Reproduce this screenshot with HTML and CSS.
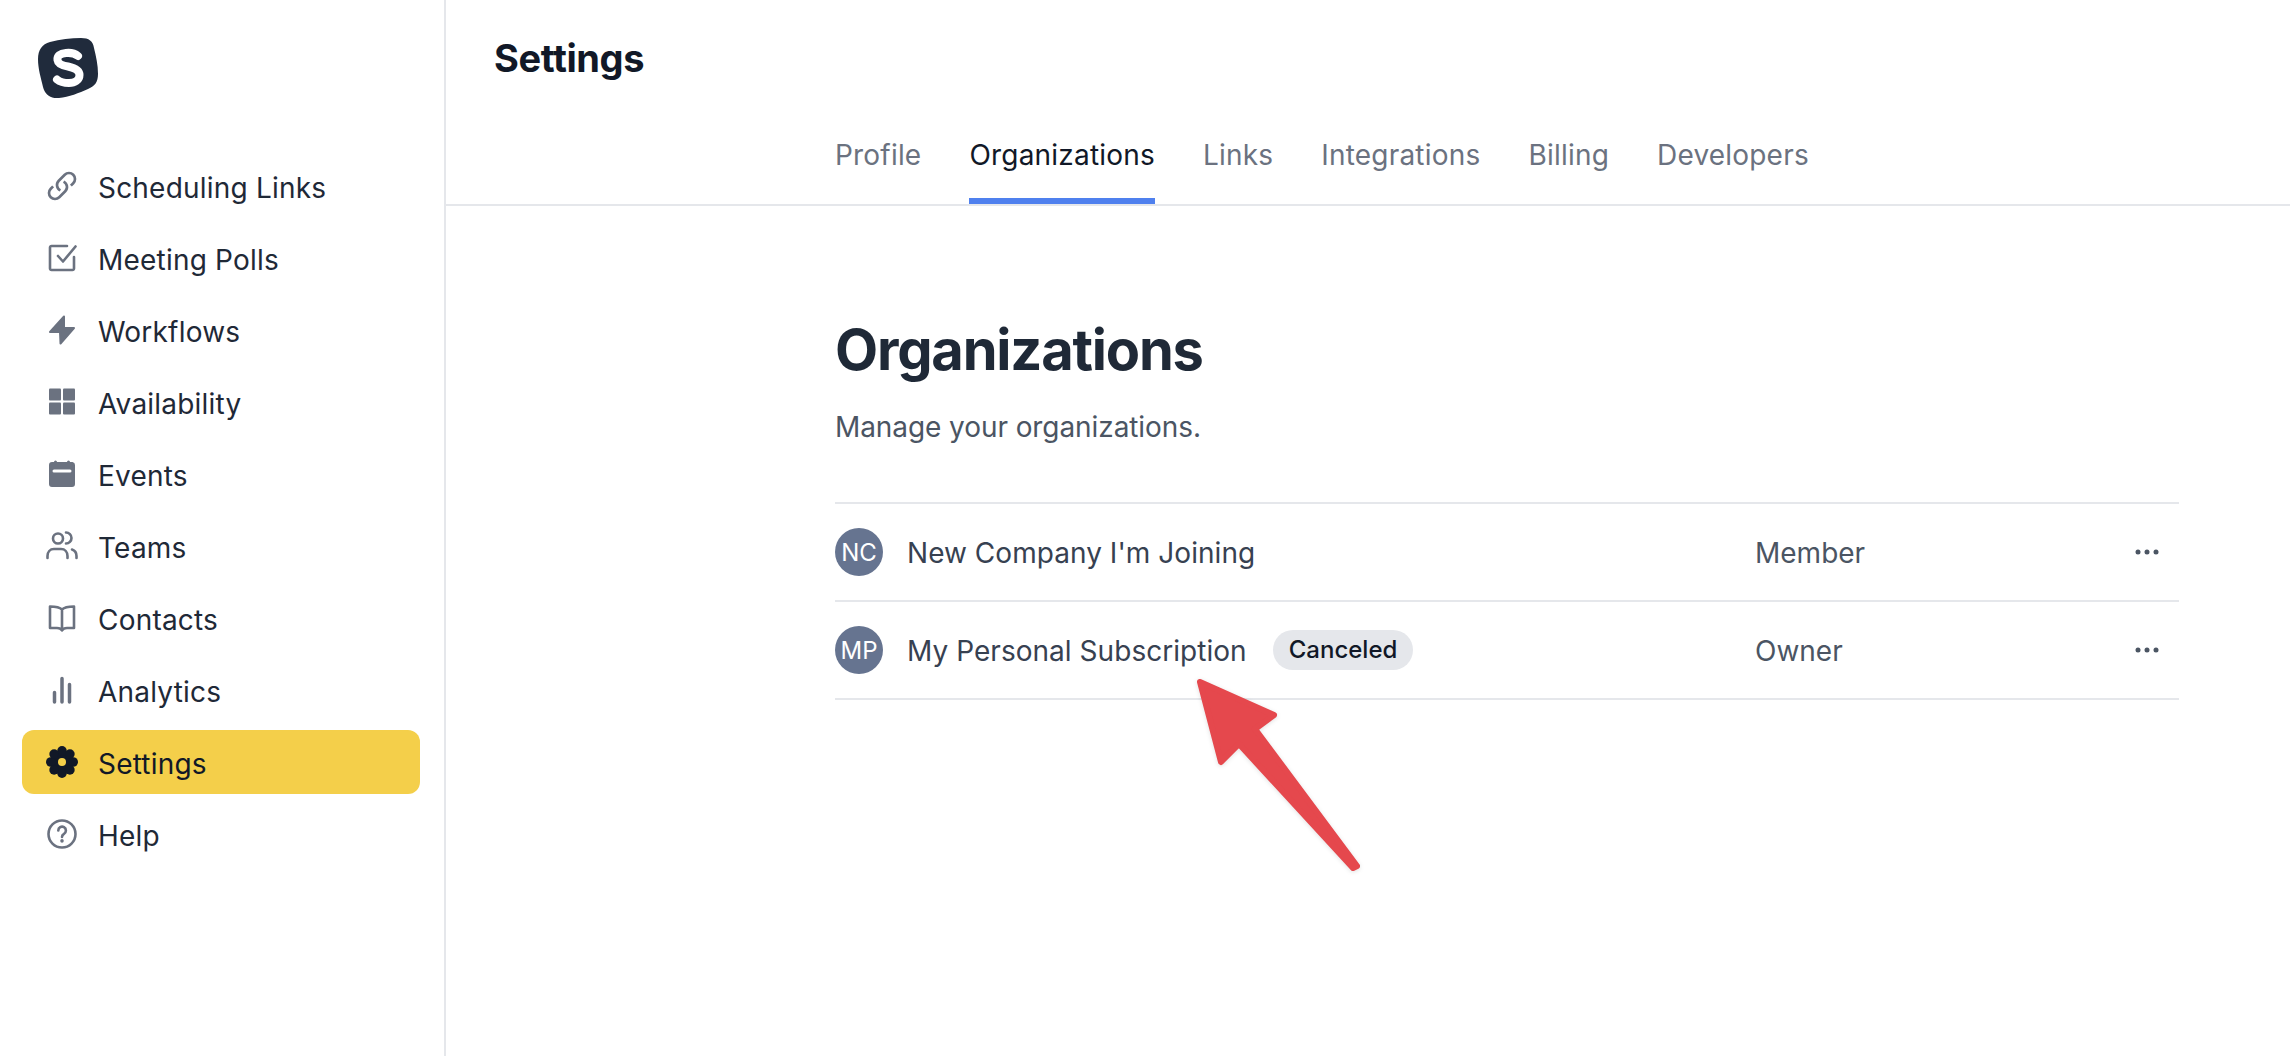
FILE: index.html
```html
<!DOCTYPE html>
<html lang="en">
<head>
<meta charset="utf-8">
<title>Settings</title>
<link rel="stylesheet" href="styles.css">
</head>
<body>
<div class="app">
  <aside class="sidebar">
    <div class="logo">
      <svg width="60" height="60" viewBox="0 0 60 60"><path class="logo-bg" d="M12 4C22 1.500 33 0 43 0C51 0 55 3 56 10C58 18 60 27 60 36C60 44 57 48 50 51C41 55 31 59 21 60C13 61 7 57 5 49C3 40 0 31 0 21C0 12 4 6 12 4Z"/><path class="logo-s" d="M40 18C37 15.500 33 14.500 28 15C22 15.500 19 18 19.500 22C20 26 24 27.500 30 28.500C37 30 41.500 32 41.500 37C41.500 42 37 45 31 45C26 45 22 44 19 41.500"/></svg>
    </div>
    <nav class="nav">
      <a class="nav-item"><svg class="icon line" viewBox="0 0 24 24"><path d="M13.19 8.688a4.5 4.5 0 011.242 7.244l-4.5 4.5a4.5 4.5 0 01-6.364-6.364l1.757-1.757m13.35-.622l1.757-1.757a4.5 4.5 0 00-6.364-6.364l-4.5 4.5a4.5 4.500 0 001.242 7.244"/></svg><span>Scheduling Links</span></a>
      <a class="nav-item"><svg class="icon line32" viewBox="0 0 32 32"><path d="M21 4H5.500A1.500 1.500 0 004 5.500V26.500A1.500 1.500 0 005.500 28H26.500A1.500 1.500 0 0028 26.500V15"/><path d="M12 14l5 5.500L29.500 4.500"/></svg><span>Meeting Polls</span></a>
      <a class="nav-item"><svg class="icon solid" viewBox="0 0 32 32"><path d="M18 2.500L4 18H14L14.500 29.500L28 14H18Z"/></svg><span>Workflows</span></a>
      <a class="nav-item"><svg class="icon fill" viewBox="0 0 32 32"><rect x="3" y="2.500" width="12" height="12" rx="1"/><rect x="17" y="2.500" width="12" height="12" rx="1"/><rect x="3" y="16.500" width="12" height="12" rx="1"/><rect x="17" y="16.500" width="12" height="12" rx="1"/></svg><span>Availability</span></a>
      <a class="nav-item"><svg class="icon fill" viewBox="0 0 32 32"><path fill-rule="evenodd" d="M8 4a1.500 1.500 0 013 0h10a1.500 1.500 0 013 0h2.500A3 3 0 0129 7v19a3 3 0 01-3 3H6a3 3 0 01-3-3V7a3 3 0 013-3zM8 11.500a1 1 0 000 3h16a1 1 0 000-3z"/></svg><span>Events</span></a>
      <a class="nav-item"><svg class="icon line32" viewBox="0 0 32 32"><circle cx="12" cy="8.500" r="5"/><path d="M1.500 28V26C1.500 22 4 19 8 19H15C19 19 21.500 22 21.500 26V28"/><path d="M20 2.500A5.500 5.500 0 0120 13.500"/><path d="M26 19.500C29 20.500 30.500 23 30.500 26V28"/></svg><span>Teams</span></a>
      <a class="nav-item"><svg class="icon line32" viewBox="0 0 32 32"><path d="M16 7.500C14 5.500 10 4.500 4 4.500V26H11C13 26 15 26.500 16 28.500C17 26.500 19 26 21 26H28V4.500C22 4.500 18 5.500 16 7.500ZM16 7.500V28"/></svg><span>Contacts</span></a>
      <a class="nav-item"><svg class="icon bars" viewBox="0 0 32 32"><path d="M8.500 18.500V28M16 4.500V28M23.500 10.500V28"/></svg><span>Analytics</span></a>
      <a class="nav-item active"><svg class="icon gear" viewBox="0 0 32 32"><circle cx="16" cy="16" r="11.500"/><circle cx="16" cy="4.800" r="4.800"/><circle cx="16" cy="27.200" r="4.800"/><circle cx="4.800" cy="16" r="4.800"/><circle cx="27.200" cy="16" r="4.800"/><circle cx="8.100" cy="8.100" r="4.800"/><circle cx="23.900" cy="8.100" r="4.800"/><circle cx="8.100" cy="23.900" r="4.800"/><circle cx="23.900" cy="23.900" r="4.800"/><circle class="gear-hole" cx="16" cy="16" r="4"/></svg><span>Settings</span></a>
      <a class="nav-item"><svg class="icon line32" viewBox="0 0 32 32"><circle cx="16" cy="16" r="13.500"/><path d="M12.300 12.500A3.800 3.800 0 1118 15.800C16.800 16.500 16 17.200 16 19"/><path class="dot" d="M16 22.800v.2"/></svg><span>Help</span></a>
    </nav>
  </aside>
  <main class="main">
    <header class="topbar">
      <h1 class="page-title">Settings</h1>
      <div class="tabs">
        <a class="tab">Profile</a>
        <a class="tab current">Organizations</a>
        <a class="tab">Links</a>
        <a class="tab">Integrations</a>
        <a class="tab">Billing</a>
        <a class="tab">Developers</a>
      </div>
    </header>
    <section class="content">
      <h2 class="heading">Organizations</h2>
      <p class="sub">Manage your organizations.</p>
      <ul class="org-list">
        <li class="org">
          <span class="avatar">NC</span>
          <span class="org-name">New Company I'm Joining</span>
          <span class="role">Member</span>
          <svg class="more" viewBox="0 0 24 6"><circle cx="3" cy="3" r="2.500"/><circle cx="12" cy="3" r="2.500"/><circle cx="21" cy="3" r="2.500"/></svg>
        </li>
        <li class="org">
          <span class="avatar">MP</span>
          <span class="org-name">My Personal Subscription</span>
          <span class="badge">Canceled</span>
          <span class="role">Owner</span>
          <svg class="more" viewBox="0 0 24 6"><circle cx="3" cy="3" r="2.500"/><circle cx="12" cy="3" r="2.500"/><circle cx="21" cy="3" r="2.500"/></svg>
        </li>
      </ul>
    </section>
  </main>
  <svg class="arrow" viewBox="0 0 180 205"><path d="M10 10L84 43L65 57L167 194L163 196L49 72L31 90Z"/></svg>
</div>
</body>
</html>
```
FILE: styles.css
```css
* { box-sizing: border-box; }
html, body { margin: 0; height: 100%; background: #fff; }
body { font-family: Inter, "Liberation Sans", sans-serif; color: #1f2937; overflow: hidden; }
.app { position: relative; display: flex; height: 1056px; }
.sidebar { flex: none; width: 446px; border-right: 2px solid #e5e7eb; padding: 38px 22px 0; }
.logo { height: 116px; padding-left: 16px; }
.logo svg { display: block; }
.logo-bg { fill: #202b3c; }
.logo-s { fill: none; stroke: #fff; stroke-width: 8; stroke-linecap: round; }
.nav { display: flex; flex-direction: column; gap: 8px; width: 398px; }
.nav-item { display: flex; align-items: center; gap: 20px; height: 64px; padding-left: 24px; border-radius: 12px; font-size: 28px; font-weight: 400; letter-spacing: 0.2px; color: #1f2937; }
.nav-item span { padding-top: 3px; }
.nav-item.active { background: #f4cf4a; color: #111827; }
.icon { flex: none; width: 32px; height: 32px; }
.line { fill: none; stroke: #6b7280; stroke-width: 2; }
.line32 { fill: none; stroke: #6b7280; stroke-width: 2.600; stroke-linecap: round; stroke-linejoin: round; }
.dot { stroke-width: 3.500; }
.solid { fill: #6b7280; stroke: #6b7280; stroke-width: 2; stroke-linejoin: round; }
.fill { fill: #6b7280; }
.bars { fill: none; stroke: #6b7280; stroke-width: 3.500; stroke-linecap: round; }
.gear { fill: #111827; }
.gear-hole { fill: #f4cf4a; }
.main { flex: 1; min-width: 0; }
.topbar { height: 206px; border-bottom: 2px solid #e5e7eb; display: flex; flex-direction: column; }
.page-title { margin: 0; padding: 38px 0 0 48px; font-size: 38px; line-height: 40px; font-weight: 700; letter-spacing: -0.4px; color: #111827; }
.tabs { display: flex; gap: 48px; margin-top: auto; padding-left: 389px; }
.tab { padding-bottom: 25px; border-bottom: 6px solid transparent; font-size: 28px; line-height: 36px; font-weight: 400; letter-spacing: 0.2px; color: #6b7280; }
.tab.current { color: #111827; border-bottom-color: #4f80ee; }
.content { padding: 108px 111px 0 389px; }
.heading { margin: 0; font-size: 56px; line-height: 72px; font-weight: 700; letter-spacing: -1.2px; color: #1f2937; }
.sub { margin: 21px 0 0; font-size: 28px; line-height: 40px; letter-spacing: -0.08px; color: #4b5563; }
.org-list { list-style: none; margin: 55px 0 0; padding: 0; border-top: 2px solid #e5e7eb; }
.org { display: flex; align-items: center; height: 98px; border-bottom: 2px solid #e5e7eb; }
.avatar { flex: none; display: flex; align-items: center; justify-content: center; width: 48px; height: 48px; border-radius: 50%; background: #667490; color: #fff; font-size: 24px; }
.org-name { margin-left: 24px; padding-top: 2px; font-size: 28px; font-weight: 400; letter-spacing: 0.04px; color: #374151; }
.badge { margin-left: 26px; padding: 0 16px; height: 40px; line-height: 40px; border-radius: 20px; background: #e5e7eb; color: #111827; font-size: 24px; font-weight: 500; }
.role { margin-left: auto; width: 380px; flex: none; font-size: 28px; padding-top: 2px; color: #4b5563; }
.more { flex: none; width: 24px; height: 6px; margin-right: 20px; fill: #4b5563; }
.arrow { position: absolute; left: 1190px; top: 672px; width: 180px; height: 205px; fill: #e5484d; stroke: #e5484d; stroke-width: 6; stroke-linejoin: round; filter: drop-shadow(0 1px 2px rgba(0,0,0,.12)); }
```
